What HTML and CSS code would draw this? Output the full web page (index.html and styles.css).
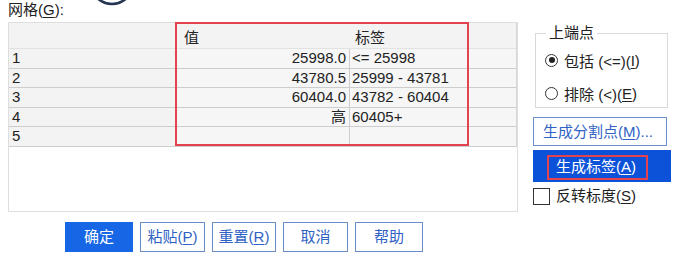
FILE: index.html
```html
<!doctype html>
<html lang="zh-CN">
<head>
    <meta charset="UTF-8">
    <title>重新编码</title>
    <link rel="stylesheet" href="styles.css">
</head>
<body>
    <div class="dialog">
        <div class="main">
            <div class="grid-pane">
                <div class="grid-label">网格(<u>G</u>):</div>
                <div class="grid">
                    <div class="cell head"></div>
                    <div class="cell head">值</div>
                    <div class="cell head label-head">标签</div>

                    <div class="cell num">1</div>
                    <div class="cell val">25998.0</div>
                    <div class="cell lab">&lt;= 25998</div>

                    <div class="cell num">2</div>
                    <div class="cell val">43780.5</div>
                    <div class="cell lab">25999 - 43781</div>

                    <div class="cell num">3</div>
                    <div class="cell val">60404.0</div>
                    <div class="cell lab">43782 - 60404</div>

                    <div class="cell num">4</div>
                    <div class="cell val">高</div>
                    <div class="cell lab">60405+</div>

                    <div class="cell num">5</div>
                    <div class="cell val"></div>
                    <div class="cell lab"></div>

                    <div class="mark"></div>
                </div>
            </div>

            <div class="side">
                <fieldset class="group">
                    <legend>上端点</legend>
                    <label class="opt"><span class="radio on"></span>包括 (&lt;=)(<u>I</u>)</label>
                    <label class="opt"><span class="radio"></span>排除 (&lt;)(<u>E</u>)</label>
                </fieldset>
                <button class="btn split">生成分割点(<u>M</u>)...</button>
                <button class="btn make"><span class="hl">生成标签(<u>A</u>)</span></button>
                <label class="check"><span class="box"></span>反转标度(<u>S</u>)</label>
            </div>
        </div>

        <div class="actions">
            <button class="btn primary w68">确定</button>
            <button class="btn w65">粘贴(<u>P</u>)</button>
            <button class="btn w64">重置(<u>R</u>)</button>
            <button class="btn w65">取消</button>
            <button class="btn w68">帮助</button>
        </div>

        <svg class="ring" width="50" height="10" viewBox="0 0 50 10">
            <circle cx="24" cy="-17" r="21" fill="none" stroke="#253652" stroke-width="2.6"/>
        </svg>
    </div>
</body>
</html>
```

FILE: styles.css
```css
*{
    padding: 0;
    margin: 0;
    box-sizing: border-box;
}
body{
    background: #fff;
    color: #222;
    font-family: "Liberation Sans", "Noto Sans CJK SC", sans-serif;
    font-size: 15px;
}
u{
    text-decoration: underline;
    text-underline-offset: 2px;
}
.dialog{
    position: relative;
    width: 680px;
    height: 259px;
    padding: 0 10px 0 8px;
}
.main{
    display: flex;
    gap: 15px;
}

/* 网格 */
.grid-label{
    height: 22px;
    line-height: 20px;
}
.grid{
    position: relative;
    width: 510px;
    height: 190px;
    border: 1px solid #dedede;
    display: grid;
    grid-template-columns: 166px 175px 1fr;
    grid-template-rows: 26px repeat(5, 19.5px);
    align-content: start;
}
.cell{
    background: #f3f3f3;
    border-bottom: 1px solid #cdcdcd;
    line-height: 18px;
    white-space: nowrap;
    overflow: hidden;
}
.head{
    padding: 6px 0 0 9px;
    line-height: 18px;
    border-bottom-color: #e2e2e2;
}
.label-head{
    padding-left: 5px;
    border-right: 1px solid #d6d6d6;
}
.num{
    padding-left: 3px;
}
.val{
    text-align: right;
    padding-right: 3px;
    background: #f6f6f6;
    border-right: 1px solid #cdcdcd;
}
.lab{
    padding-left: 2px;
    background: #f6f6f6;
    border-right: 1px solid #d6d6d6;
}
.mark{
    position: absolute;
    left: 166px;
    top: -1px;
    width: 294px;
    height: 124px;
    border: 2px solid #e2434f;
}

/* 右侧 */
.side{
    width: 138px;
    padding-top: 24px;
    display: flex;
    flex-direction: column;
    align-items: flex-start;
}
.group{
    width: 133px;
    margin-left: 2px;
    height: 84px;
    border: 1px solid #d9d9d9;
    padding: 6px 0 0 9px;
}
.group legend{
    padding: 0 3px;
    margin-left: 1px;
    line-height: 18px;
}
.opt{
    display: flex;
    align-items: center;
    height: 24px;
    margin-bottom: 9px;
}
.radio{
    width: 13px;
    height: 13px;
    border: 1.5px solid #333;
    border-radius: 50%;
    margin-right: 6px;
    display: flex;
    align-items: center;
    justify-content: center;
}
.radio.on::after{
    content: "";
    width: 6px;
    height: 6px;
    border-radius: 50%;
    background: #222;
}

.btn{
    font-family: inherit;
    font-size: 15px;
    background: #fff;
    color: #2f62c4;
    border: 1.5px solid #6b8dca;
    cursor: pointer;
    height: 30px;
    line-height: 20px;
}
.split{
    width: 134px;
    height: 29px;
    margin-top: 9px;
    text-align: left;
    padding-left: 9px;
    white-space: nowrap;
}
.make{
    width: 138px;
    height: 32px;
    margin-top: 4px;
    background: #0c52d9;
    border-color: #0c52d9;
    color: #fff;
    text-align: left;
    padding: 4px 0 0 13px;
    display: flex;
    align-items: flex-start;
}
.hl{
    display: inline-block;
    width: 101px;
    height: 25px;
    border: 2px solid #e2434f;
    padding-left: 7px;
    line-height: 20px;
}
.check{
    display: flex;
    align-items: center;
    margin-top: 5px;
    height: 18px;
    line-height: 18px;
}
.box{
    width: 17px;
    height: 17px;
    border: 1.5px solid #333;
    margin-right: 6px;
}

/* 底部按钮 */
.actions{
    display: flex;
    gap: 7px;
    margin: 10px 0 0 57px;
}
.primary{
    background: #1766e6;
    border-color: #1766e6;
    color: #fff;
}
.w68{ width: 68px; }
.w65{ width: 65px; }
.w64{ width: 64px; }

.ring{
    position: absolute;
    left: 88px;
    top: 0;
}
```
